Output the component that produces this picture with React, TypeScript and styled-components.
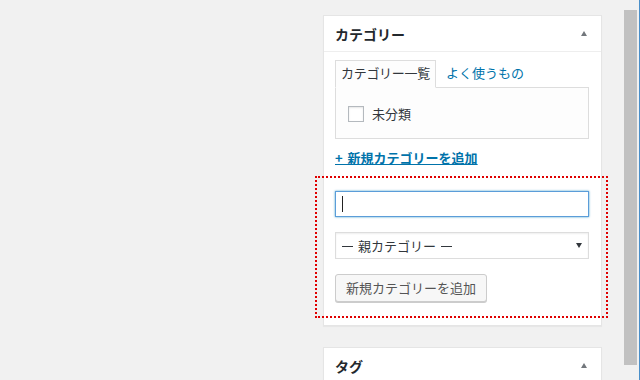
import styled, { createGlobalStyle } from 'styled-components';

const GlobalStyle = createGlobalStyle`
  html, body {
    margin: 0;
    padding: 0;
    background: #f1f1f1;
    font-family: "Noto Sans CJK JP", "Noto Sans", sans-serif;
    color: #23282d;
    font-size: 13px;
  }
`;

const Page = styled.div`
  display: flex;
  height: 380px;
  overflow: hidden;
  border-right: 1px solid #4a8fc9;
  box-sizing: border-box;
`;

const Main = styled.div`
  flex: 1;
`;

const Sidebar = styled.div`
  width: 279px;
  padding-top: 15px;
  display: flex;
  flex-direction: column;
  gap: 21px;
`;

const ScrollTrack = styled.div`
  width: 16px;
  margin-left: 21px;
  padding: 10px 2px 15px 1px;
  box-sizing: border-box;
  display: flex;
`;

const ScrollThumb = styled.div`
  flex: 1;
  background: #c1c1c1;
`;

const Panel = styled.div`
  background: #fff;
  border: 1px solid #e5e5e5;
  box-shadow: 0 1px 1px rgba(0, 0, 0, 0.04);
`;

const PanelHeader = styled.div<{ $open?: boolean }>`
  display: flex;
  align-items: center;
  justify-content: space-between;
  height: 35px;
  padding: 0 14px 0 11px;
  border-bottom: ${p => (p.$open ? '1px solid #eee' : 'none')};
`;

const PanelTitle = styled.h2`
  margin: 0;
  font-size: 14px;
  font-weight: 700;
  color: #23282d;
`;

const Caret = styled.span<{ $down?: boolean; $color?: string }>`
  width: 0;
  height: 0;
  border-left: 3.5px solid transparent;
  border-right: 3.5px solid transparent;
  ${p =>
    p.$down
      ? `border-top: 5px solid ${p.$color || '#32373c'};`
      : `border-bottom: 5px solid ${p.$color || '#72777c'};`}
`;

const PanelBody = styled.div`
  padding: 8px 12px 7px 11px;
`;

const Tabs = styled.div`
  display: flex;
  align-items: flex-end;
`;

const Tab = styled.div<{ $active?: boolean }>`
  height: 26px;
  line-height: 24px;
  padding: 0 5px;
  font-size: 13px;
  letter-spacing: -0.3px;
  margin-bottom: -1px;
  position: relative;
  ${p =>
    p.$active
      ? `
    border: 1px solid #ddd;
    border-bottom: 1px solid #fdfdfd;
    background: #fdfdfd;
    color: #32373c;
  `
      : `
    border: 1px solid transparent;
    color: #0073aa;
    padding-left: 9px;
    letter-spacing: 0;
  `}
`;

const TabPanel = styled.div`
  background: #fdfdfd;
  border: 1px solid #ddd;
  height: 49px;
  display: flex;
  align-items: center;
  padding: 1px 12px 0;
  gap: 8px;
`;

const Checkbox = styled.span`
  width: 14px;
  height: 14px;
  border: 1px solid #b4b9be;
  background: #fff;
  box-shadow: inset 0 1px 2px rgba(0, 0, 0, 0.1);
`;

const CheckLabel = styled.span`
  font-size: 13px;
  color: #32373c;
`;

const AddLink = styled.a`
  display: inline-block;
  margin-top: 9px;
  font-size: 13px;
  font-weight: 600;
  color: #0073aa;
  text-decoration: underline;
  line-height: 20px;
  word-spacing: 2px;
`;

const AdderForm = styled.div`
  margin: 8px -19px 0 -20px;
  padding: 13px 17px 14px 18px;
  border: 2px dotted #e00000;
  display: flex;
  flex-direction: column;
  gap: 15px;
  align-items: flex-start;
`;

const TextField = styled.div`
  align-self: stretch;
  height: 24px;
  border: 1px solid #5b9dd9;
  box-shadow: 0 0 2px rgba(30, 140, 190, 0.8);
  background: #fff;
  display: flex;
  align-items: center;
  padding-left: 6px;
`;

const TextCaret = styled.span`
  width: 1px;
  height: 16px;
  background: #222;
`;

const SelectBox = styled.div`
  align-self: stretch;
  height: 25px;
  border: 1px solid #ddd;
  box-shadow: inset 0 1px 2px rgba(0, 0, 0, 0.07);
  background: #fff;
  display: flex;
  align-items: center;
  justify-content: space-between;
  padding: 0 6px 0 6px;
  font-size: 13px;
  color: #32373c;
`;

const Dash = styled.span`
  display: inline-block;
  width: 11px;
  height: 1px;
  background: #32373c;
  vertical-align: middle;
  margin: 0 5px 2px 0;
  &:last-child {
    margin: 0 0 2px 5px;
  }
`;

const Button = styled.div`
  height: 26px;
  line-height: 26px;
  padding: 0 10px;
  border: 1px solid #ccc;
  border-radius: 3px;
  background: #f7f7f7;
  box-shadow: 0 1px 0 #ccc;
  color: #555;
  font-size: 13px;
`;

export default function App() {
  return (
    <>
      <GlobalStyle />
      <Page>
        <Main />
        <Sidebar>
          <Panel>
            <PanelHeader $open>
              <PanelTitle>カテゴリー</PanelTitle>
              <Caret />
            </PanelHeader>
            <PanelBody>
              <Tabs>
                <Tab $active>カテゴリー一覧</Tab>
                <Tab>よく使うもの</Tab>
              </Tabs>
              <TabPanel>
                <Checkbox />
                <CheckLabel>未分類</CheckLabel>
              </TabPanel>
              <AddLink>+ 新規カテゴリーを追加</AddLink>
              <AdderForm>
                <TextField>
                  <TextCaret />
                </TextField>
                <SelectBox>
                  <span>
                    <Dash />親カテゴリー<Dash />
                  </span>
                  <Caret $down />
                </SelectBox>
                <Button>新規カテゴリーを追加</Button>
              </AdderForm>
            </PanelBody>
          </Panel>
          <Panel>
            <PanelHeader>
              <PanelTitle>タグ</PanelTitle>
              <Caret />
            </PanelHeader>
          </Panel>
        </Sidebar>
        <ScrollTrack>
          <ScrollThumb />
        </ScrollTrack>
      </Page>
    </>
  );
}
